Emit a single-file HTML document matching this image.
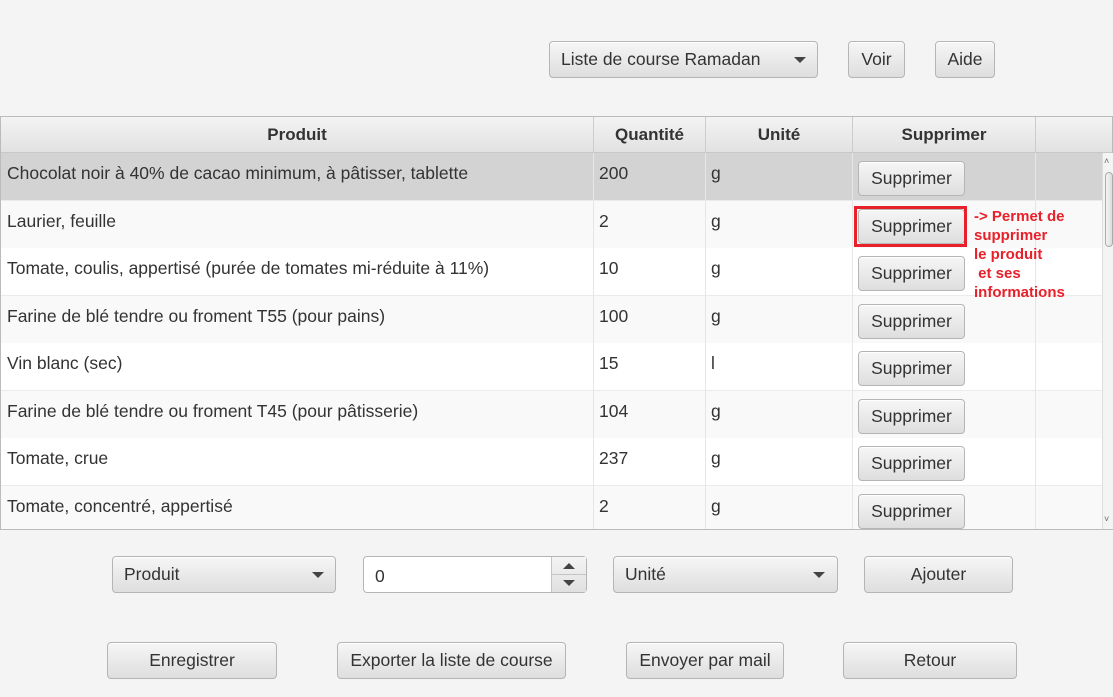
<!DOCTYPE html>
<html><head><meta charset="utf-8"><style>
*{box-sizing:border-box;margin:0;padding:0}
body{width:1113px;height:697px;background:#f4f4f4;font-family:"Liberation Sans",sans-serif;font-size:16px;color:#333;position:relative;overflow:hidden}
.a{position:absolute}
.btn{position:absolute;border:1px solid #b5b5b5;border-radius:4px;background:linear-gradient(#f6f6f6,#dedede);display:flex;align-items:center;justify-content:center;font-size:17.5px;color:#333;box-shadow:inset 0 1px 0 #fff;white-space:nowrap}
.combo{justify-content:flex-start;padding-left:11px}
.arr{position:absolute;width:0;height:0;border-left:6px solid transparent;border-right:6px solid transparent;border-top:6px solid #444}
.hd{position:absolute;top:117px;height:36px;background:linear-gradient(#f3f3f3,#e2e2e2);border-right:1px solid #ccc;border-bottom:1px solid #c8c8c8;font-weight:bold;font-size:17px;display:flex;align-items:center;justify-content:center;color:#333}
.row{position:absolute;left:1px;width:1101px;height:48px;border-bottom:1px solid #ebebeb}
.cell{position:absolute;top:10px;font-size:17.5px;color:#333;white-space:nowrap}
.vl{position:absolute;top:153px;height:376px;width:1px;background:#e6e6e6}
.sb{position:absolute;left:858px;width:107px;height:35px;font-size:17.5px}
.note{position:absolute;color:#e8202a;font-weight:bold;font-size:15px;line-height:19px;white-space:nowrap}
</style></head><body>
<div class="btn combo" style="left:549px;top:41px;width:269px;height:37px">Liste de course Ramadan</div><div class="arr" style="left:794px;top:57px"></div>
<div class="btn" style="left:848px;top:41px;width:57px;height:37px">Voir</div>
<div class="btn" style="left:935px;top:41px;width:60px;height:37px">Aide</div>

<div class="a" style="left:0;top:116px;width:1113px;height:414px;border:1px solid #bbb;background:#fff"></div>
<div class="hd" style="left:1px;width:593px">Produit</div>
<div class="hd" style="left:594px;width:112px">Quantité</div>
<div class="hd" style="left:706px;width:147px">Unité</div>
<div class="hd" style="left:853px;width:183px">Supprimer</div>
<div class="hd" style="left:1036px;width:76px;border-right:none"></div>

<div class="row" style="top:153px;background:#d3d3d3"><div class="cell" style="left:6px">Chocolat noir à 40% de cacao minimum, à pâtisser, tablette</div><div class="cell" style="left:598px">200</div><div class="cell" style="left:710px">g</div></div>
<div class="row" style="top:201px;background:#f9f9f9"><div class="cell" style="left:6px">Laurier, feuille</div><div class="cell" style="left:598px">2</div><div class="cell" style="left:710px">g</div></div>
<div class="row" style="top:248px;background:#fff"><div class="cell" style="left:6px">Tomate, coulis, appertisé (purée de tomates mi-réduite à 11%)</div><div class="cell" style="left:598px">10</div><div class="cell" style="left:710px">g</div></div>
<div class="row" style="top:296px;background:#f9f9f9"><div class="cell" style="left:6px">Farine de blé tendre ou froment T55 (pour pains)</div><div class="cell" style="left:598px">100</div><div class="cell" style="left:710px">g</div></div>
<div class="row" style="top:343px;background:#fff"><div class="cell" style="left:6px">Vin blanc (sec)</div><div class="cell" style="left:598px">15</div><div class="cell" style="left:710px">l</div></div>
<div class="row" style="top:391px;background:#f9f9f9"><div class="cell" style="left:6px">Farine de blé tendre ou froment T45 (pour pâtisserie)</div><div class="cell" style="left:598px">104</div><div class="cell" style="left:710px">g</div></div>
<div class="row" style="top:438px;background:#fff"><div class="cell" style="left:6px">Tomate, crue</div><div class="cell" style="left:598px">237</div><div class="cell" style="left:710px">g</div></div>
<div class="row" style="top:486px;height:43px;background:#f9f9f9;border-bottom:none"><div class="cell" style="left:6px">Tomate, concentré, appertisé</div><div class="cell" style="left:598px">2</div><div class="cell" style="left:710px">g</div></div>
<div class="vl" style="left:593px"></div><div class="vl" style="left:705px"></div><div class="vl" style="left:852px"></div><div class="vl" style="left:1035px"></div>

<div class="btn sb" style="top:161px">Supprimer</div>
<div class="btn sb" style="top:209px">Supprimer</div>
<div class="a" style="left:854px;top:206px;width:113px;height:41px;border:3px solid #e8202a"></div>
<div class="btn sb" style="top:256px">Supprimer</div>
<div class="btn sb" style="top:304px">Supprimer</div>
<div class="btn sb" style="top:351px">Supprimer</div>
<div class="btn sb" style="top:399px">Supprimer</div>
<div class="btn sb" style="top:446px">Supprimer</div>
<div class="btn sb" style="top:494px">Supprimer</div>
<div class="note" style="left:974px;top:207px">-&gt; Permet de<br>supprimer<br>le produit<br>&nbsp;et ses<br>informations</div>

<div class="a" style="left:1102px;top:153px;width:11px;height:376px;background:#f4f4f4;border-left:1px solid #ddd"></div>
<div class="a" style="left:1105px;top:172px;width:8px;height:75px;border:1px solid #aaa;border-radius:4px;background:linear-gradient(90deg,#f4f4f4,#ddd)"></div>
<div class="a" style="left:1104px;top:156px;font-size:9px;color:#666">˄</div>
<div class="a" style="left:1104px;top:514px;font-size:9px;color:#666">˅</div>

<div class="btn combo" style="left:112px;top:556px;width:224px;height:37px">Produit</div><div class="arr" style="left:312px;top:572px"></div>
<div class="a" style="left:363px;top:556px;width:224px;height:37px;border:1px solid #b5b5b5;border-radius:4px;background:#fff;padding:9px 11px;font-size:17.5px">0</div>
<div class="a" style="left:551px;top:557px;width:35px;height:35px;border-left:1px solid #c5c5c5;background:linear-gradient(#f4f4f4,#e0e0e0)"></div>
<div class="a" style="left:551px;top:574px;width:35px;height:1px;background:#c5c5c5"></div>
<div class="a" style="left:563px;top:563px;border-left:6px solid transparent;border-right:6px solid transparent;border-bottom:6px solid #444"></div>
<div class="arr" style="left:563px;top:580px"></div>
<div class="btn combo" style="left:613px;top:556px;width:225px;height:37px">Unité</div><div class="arr" style="left:813px;top:572px"></div>
<div class="btn" style="left:864px;top:556px;width:149px;height:37px">Ajouter</div>

<div class="btn" style="left:107px;top:642px;width:170px;height:37px">Enregistrer</div>
<div class="btn" style="left:337px;top:642px;width:229px;height:37px">Exporter la liste de course</div>
<div class="btn" style="left:626px;top:642px;width:158px;height:37px">Envoyer par mail</div>
<div class="btn" style="left:843px;top:642px;width:174px;height:37px">Retour</div>
</body></html>
